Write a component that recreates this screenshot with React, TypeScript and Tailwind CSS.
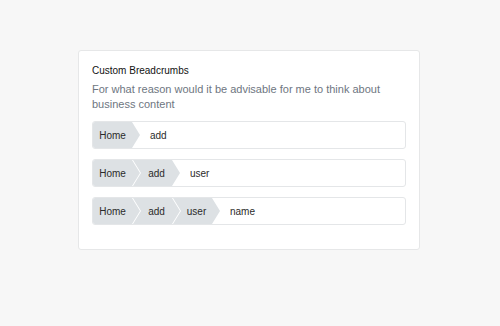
import React from 'react';

const rows: string[][] = [
  ['Home', 'add'],
  ['Home', 'add', 'user'],
  ['Home', 'add', 'user', 'name'],
];

const firstClip = 'polygon(0 0, calc(100% - 8px) 0, 100% 50%, calc(100% - 8px) 100%, 0 100%)';
const midClip =
  'polygon(0 0, calc(100% - 8px) 0, 100% 50%, calc(100% - 8px) 100%, 0 100%, 8px 50%)';

const Crumbs: React.FC<{ items: string[] }> = ({ items }) => {
  const head = items.slice(0, -1);
  const last = items[items.length - 1];
  return (
    <div className="flex h-[28px] items-stretch overflow-hidden rounded-[3px] border border-[#e4e6e8] bg-white text-[10px] text-[#2b2b2b]">
      {head.map((label, i) => (
        <div
          key={label}
          className={`flex w-[47px] shrink-0 items-center justify-center bg-[#dde1e4] pr-[8px] ${
            i === 0 ? '' : '-ml-[7px] pl-[8px]'
          }`}
          style={{ clipPath: i === 0 ? firstClip : midClip }}
        >
          {label}
        </div>
      ))}
      <div className="flex items-center pl-[10px]">{last}</div>
    </div>
  );
};

export default function App() {
  return (
    <div
      className="h-[326px] w-[500px] bg-[#f7f7f7] pt-[50px] pl-[78px]"
      style={{ fontFamily: '"Liberation Sans", Arial, sans-serif' }}
    >
      <div className="h-[200px] w-[342px] rounded-[3px] border border-[#e6e7e8] bg-white px-[13px] pt-[13px]">
        <div className="text-[10px] leading-[14px] text-[#111]">Custom Breadcrumbs</div>
        <p className="mt-[4px] text-[11px] leading-[15px] text-[#6e7681]">
          For what reason would it be advisable for me to think about business content
        </p>
        <div className="mt-[9px] flex flex-col gap-[10px]">
          {rows.map((r) => (
            <Crumbs key={r.join('/')} items={r} />
          ))}
        </div>
      </div>
    </div>
  );
}
